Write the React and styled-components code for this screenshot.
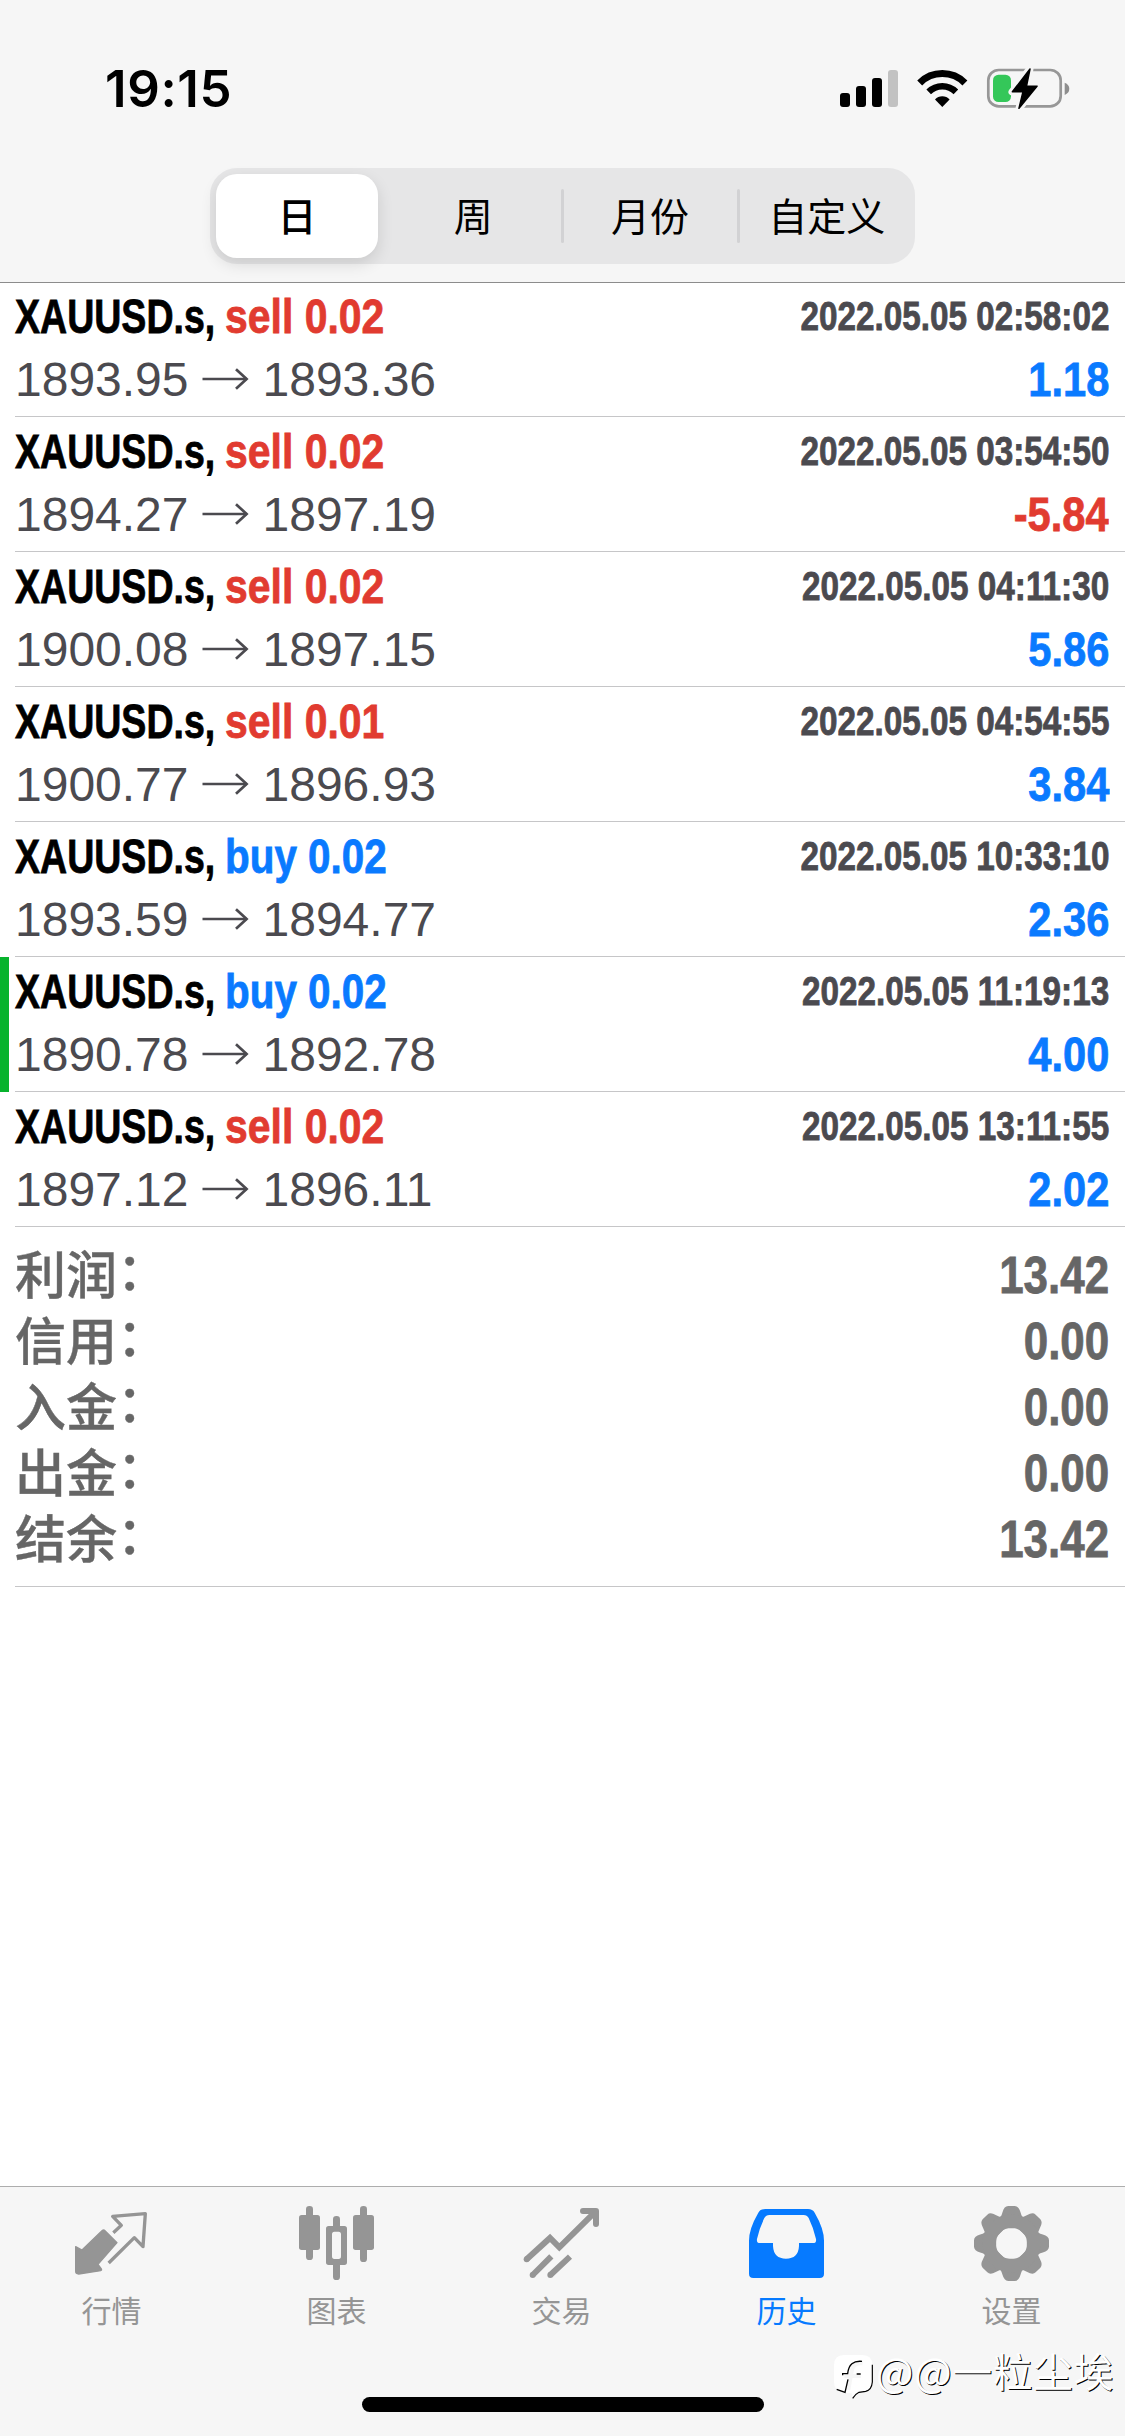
import styled, { createGlobalStyle } from 'styled-components';

const RED = '#e13b30';
const BLUE = '#0a7aff';

const deals = [
  { side: 'sell', volume: '0.02', open: '1893.95', close: '1893.36', time: '2022.05.05 02:58:02', profit: '1.18' },
  { side: 'sell', volume: '0.02', open: '1894.27', close: '1897.19', time: '2022.05.05 03:54:50', profit: '-5.84' },
  { side: 'sell', volume: '0.02', open: '1900.08', close: '1897.15', time: '2022.05.05 04:11:30', profit: '5.86' },
  { side: 'sell', volume: '0.01', open: '1900.77', close: '1896.93', time: '2022.05.05 04:54:55', profit: '3.84' },
  { side: 'buy', volume: '0.02', open: '1893.59', close: '1894.77', time: '2022.05.05 10:33:10', profit: '2.36' },
  { side: 'buy', volume: '0.02', open: '1890.78', close: '1892.78', time: '2022.05.05 11:19:13', profit: '4.00', marked: true },
  { side: 'sell', volume: '0.02', open: '1897.12', close: '1896.11', time: '2022.05.05 13:11:55', profit: '2.02' },
];

const totals = [
  { label: '利润', value: '13.42' },
  { label: '信用', value: '0.00' },
  { label: '入金', value: '0.00' },
  { label: '出金', value: '0.00' },
  { label: '结余', value: '13.42' },
];

const periods = ['日', '周', '月份', '自定义'];

const tabs = [
  { label: '行情', icon: QuotesIcon },
  { label: '图表', icon: ChartIcon },
  { label: '交易', icon: TradeIcon },
  { label: '历史', icon: HistoryIcon, active: true },
  { label: '设置', icon: SettingsIcon },
];

function App() {
  return (
    <Screen>
      <GlobalStyle />
      <Header>
        <StatusBar>
          <Clock>19:15</Clock>
          <StatusIcons />
        </StatusBar>
        <Segment>
          {periods.map((name, i) => (
            <SegmentItem key={name} $active={i === 0} $divider={i > 1}>
              {name}
            </SegmentItem>
          ))}
        </Segment>
      </Header>
      <DealList>
        {deals.map((deal) => (
          <Deal key={deal.time} deal={deal} />
        ))}
      </DealList>
      <Summary>
        {totals.map((e) => (
          <SummaryRow key={e.label}>
            <SummaryLabel>
              {e.label}
              <Colon>：</Colon>
            </SummaryLabel>
            <SummaryValue>{e.value}</SummaryValue>
          </SummaryRow>
        ))}
      </Summary>
      <TabBar>
        {tabs.map(({ label, icon: Icon, active }) => (
          <Tab key={label} $active={active}>
            <Icon />
            <TabLabel>{label}</TabLabel>
          </Tab>
        ))}
        <HomeIndicator />
        <Watermark>
          <WatermarkLogo />
          <span>@@一粒尘埃</span>
        </Watermark>
      </TabBar>
    </Screen>
  );
}

export default App;

function Deal({ deal }) {
  return (
    <DealRow $marked={deal.marked}>
      <DealBody>
        <Line>
          <DealTitle>
            <Symbol>XAUUSD.s,</Symbol>
            <Side $side={deal.side}>
              {deal.side} {deal.volume}
            </Side>
          </DealTitle>
          <Time>{deal.time}</Time>
        </Line>
        <Line>
          <Prices>
            {deal.open}
            <Arrow />
            {deal.close}
          </Prices>
          <Profit $loss={deal.profit.startsWith('-')}>{deal.profit}</Profit>
        </Line>
      </DealBody>
    </DealRow>
  );
}

function Arrow() {
  return (
    <ArrowSvg viewBox="0 0 48 24" fill="none" stroke="#4b4a4f" strokeWidth="2.7">
      <path d="M0.5 12H45" />
      <path d="M34 2.2L44.6 12L34 21.8" />
    </ArrowSvg>
  );
}

function StatusIcons() {
  return (
    <StatusSvg viewBox="0 0 230 44">
      <rect x="1" y="25" width="10" height="14" rx="3" />
      <rect x="17" y="18" width="10" height="21" rx="3" />
      <rect x="33" y="10" width="10" height="29" rx="3" />
      <rect x="49" y="2" width="10" height="37" rx="3" fill="#c2c2c2" />
      <g fill="none" stroke="#000">
        <path d="M80.700 14.900A32 32 0 0 1 125.900 14.900" strokeWidth="7" />
        <path d="M89.700 23.900A19.200 19.200 0 0 1 116.900 23.900" strokeWidth="6.500" />
      </g>
      <path d="M103.300 39L96 31.400A10 10 0 0 1 110.600 31.400Z" />
      <rect x="149.300" y="2" width="72.400" height="36.400" rx="10.500" fill="none" stroke="#979797" strokeWidth="2.700" />
      <path d="M225.700 14.700Q230.300 16.500 230.300 20.800T225.700 27Z" fill="#8e8e8e" />
      <rect x="154" y="6.700" width="18" height="27.300" rx="5.500" fill="#34c759" />
      <path
        d="M191 0.500L173 24H183.700L180 40.500L198.500 18H188.500Z"
        stroke="#f6f6f6"
        strokeWidth="7"
        strokeLinejoin="round"
        fill="#f6f6f6"
      />
      <path
        d="M191 1L173.400 23.800H184L180 40.300L198 18.200H187.500Z"
        stroke="#000"
        strokeWidth="1.500"
        strokeLinejoin="round"
      />
    </StatusSvg>
  );
}

function QuotesIcon() {
  return (
    <TabSvg viewBox="225 105 225 225">
      <path
        d="M315 182L351 218L294 283L304 297Q306 301 302 302L236 312Q227 312 227 304V230L246 240L306 182Q311 178 315 182Z"
        fill="currentColor"
        stroke="currentColor"
        strokeWidth="4"
        strokeLinejoin="round"
      />
      <path
        d="M340 188L364 166L338 139L436 131L429 230L403 203L326 279"
        fill="none"
        stroke="currentColor"
        strokeWidth="10"
        strokeLinejoin="round"
      />
    </TabSvg>
  );
}

function ChartIcon() {
  return (
    <TabSvg viewBox="900 105 225 225" fill="currentColor">
      <rect x="918" y="108" width="21" height="162" rx="10" />
      <rect x="897" y="135" width="63" height="105" rx="8" />
      <rect x="999" y="138" width="21" height="42" rx="10" />
      <rect x="999" y="275" width="21" height="55" rx="10" />
      <path
        fillRule="evenodd"
        d="M986 168H1033Q1041 168 1041 176V277Q1041 285 1033 285H986Q978 285 978 277V176Q978 168 986 168ZM1003 185Q996 185 996 193V259Q996 267 1003 267H1016Q1023 267 1023 259V193Q1023 185 1016 185Z"
      />
      <rect x="1080" y="108" width="21" height="168" rx="10" />
      <rect x="1059" y="135" width="63" height="105" rx="8" />
    </TabSvg>
  );
}

function TradeIcon() {
  return (
    <TabSvg viewBox="315 105 225 225" fill="none" stroke="currentColor" strokeWidth="18">
      <path d="M320 268L390 204L418 232L524 127" />
      <path d="M489 123H528V162" strokeLinecap="round" strokeLinejoin="round" />
      <path d="M338 315L394 259M391 315L450 260" />
      <g fill="currentColor" stroke="none">
        <circle cx="320" cy="268" r="9" />
        <circle cx="338" cy="315" r="9" />
        <circle cx="391" cy="315" r="9" />
      </g>
    </TabSvg>
  );
}

function HistoryIcon() {
  return (
    <TabSvg viewBox="990 105 225 225" fill="currentColor">
      <path
        fillRule="evenodd"
        d="M1036 117H1164Q1178 117 1184 128Q1212 176 1212 212V311Q1212 324 1199 324H1000Q987 324 987 311V212Q987 176 1015 128Q1021 117 1036 117ZM1048 135Q1038 135 1033 144Q1018 175 1011 207Q1009 219 1020 219H1059V228Q1061 266 1098 266Q1135 266 1137 228V219H1179Q1190 219 1188 207Q1181 175 1166 144Q1161 135 1151 135Z"
      />
    </TabSvg>
  );
}

function SettingsIcon() {
  return (
    <TabSvg viewBox="525 105 225 225" fill="currentColor">
      <g transform="translate(634.500 220.500)">
        {[0, 45, 90, 135, 180, 225, 270, 315].map((angle) => (
          <path
            key={angle}
            transform={`rotate(${angle})`}
            d="M-42 -70Q-31 -78 -27 -94Q-22 -112 -10 -112.500H10Q22 -112 27 -94Q31 -78 42 -70L20 -46H-20Z"
          />
        ))}
        <circle r="67" fill="none" stroke="currentColor" strokeWidth="40" />
      </g>
    </TabSvg>
  );
}

function WatermarkLogo() {
  return (
    <LogoSvg viewBox="27 45 117 132">
      <path
        d="M57 45H112Q142 45 142 76V126Q142 152 116 157L98 160L84 174L80 160L62 158L34 148Q27 140 27 126V76Q27 45 57 45Z"
        fill="#fff"
      />
      <path
        d="M113 70Q84 66 80 94L70 150M58 108H108"
        fill="none"
        stroke="#f6f6f6"
        strokeWidth="12"
      />
      <path
        d="M111 64Q72 60 68 101H53V106M95 102H107M69 118L60 157L35 148"
        fill="none"
        stroke="#000"
        strokeWidth="4"
      />
      <path d="M142 74V126Q140 150 122 154L102 157Q90 163 83 175" fill="none" stroke="#000" strokeWidth="3.5" />
    </LogoSvg>
  );
}

const GlobalStyle = createGlobalStyle`
  body {
    margin: 0;
    background: #fff;
  }
  * {
    box-sizing: border-box;
  }
`;
const Screen = styled.div`
  display: flex;
  flex-direction: column;
  width: 1125px;
  height: 2436px;
  overflow: hidden;
  background: #fff;
  font-family: 'Liberation Sans', 'Noto Sans CJK SC', sans-serif;
`;
const Header = styled.header`
  position: relative;
  z-index: 1;
  flex: none;
  height: 283px;
  background: #f6f6f6;
  border-bottom: 1px solid #8c8c8c;
`;
const StatusBar = styled.div`
  display: flex;
  justify-content: space-between;
  height: 168px;
  padding: 58px 56px 0 105px;
`;
const Clock = styled.div`
  font-family: Inter, sans-serif;
  font-size: 51px;
  font-weight: 600;
  line-height: 62px;
  letter-spacing: 0.6px;
`;
const StatusSvg = styled.svg`
  width: 230px;
  height: 44px;
  margin-top: 10px;
  overflow: visible;
`;
const Segment = styled.div`
  display: flex;
  width: 705px;
  height: 96px;
  margin-left: 210px;
  padding: 6px 0 6px 6px;
  border-radius: 27px;
  background: #e6e6e7;
`;
const SegmentItem = styled.div`
  display: flex;
  justify-content: center;
  position: relative;
  width: ${(props) => (props.$active ? '162px' : '177px')};
  margin-right: ${(props) => (props.$active ? '7px' : '0')};
  border-radius: 21px;
  background: ${(props) => (props.$active ? '#fff' : 'none')};
  box-shadow: ${(props) => (props.$active ? '0 6px 16px rgba(0, 0, 0, 0.12)' : 'none')};
  font-family: 'Noto Sans CJK SC', sans-serif;
  font-size: 39px;
  font-weight: ${(props) => (props.$active ? 500 : 400)};
  line-height: 80px;

  &::before {
    content: '';
    display: ${(props) => (props.$divider ? 'block' : 'none')};
    position: absolute;
    left: -1px;
    top: 15px;
    width: 3px;
    height: 54px;
    border-radius: 2px;
    background: #d2d2d4;
  }
`;
const DealList = styled.div`
  flex: none;
  margin-top: -1px;
`;
const DealRow = styled.div`
  height: 135px;
  padding-left: ${(props) => (props.$marked ? '6px' : '15px')};
  border-left: ${(props) => (props.$marked ? '9px solid #07b32d' : 'none')};
`;
const DealBody = styled.div`
  display: flex;
  flex-direction: column;
  height: 135px;
  padding: 5px 16px 0 0;
  border-bottom: 1px solid #c6c6c8;
`;
const Line = styled.div`
  display: flex;
  justify-content: space-between;
  height: 63px;
  line-height: 59px;
  white-space: nowrap;
`;
/* bold grotesque squeezed to condensed proportions */
const Condensed = styled.div`
  font-weight: 700;
  -webkit-text-stroke: 0.8px currentColor;
  transform-origin: ${(props) => props.$origin || 'left'} center;
`;
const DealTitle = styled.div`
  display: flex;
  font-size: 49px;
  line-height: 58px;
`;
const Symbol = styled(Condensed)`
  width: 210px;
  color: #000;
  transform: scaleX(0.766);
`;
const Side = styled(Condensed)`
  color: ${(props) => (props.$side === 'buy' ? BLUE : RED)};
  transform: scaleX(${(props) => (props.$side === 'buy' ? 0.825 : 0.835)});
`;
const Time = styled(Condensed).attrs({ $origin: 'right' })`
  color: #4b4a4f;
  font-size: 40px;
  line-height: 58px;
  transform: scaleX(0.832);
`;
const Prices = styled.div`
  display: flex;
  color: #4b4a4f;
  font-size: 48px;
`;
const ArrowSvg = styled.svg`
  width: 48px;
  height: 24px;
  margin: 17px 13px 0;
`;
const Profit = styled(Condensed).attrs({ $origin: 'right' })`
  color: ${(props) => (props.$loss ? RED : BLUE)};
  font-size: 49px;
  line-height: 58px;
  transform: scaleX(0.85);
`;
const Summary = styled.div`
  flex: none;
  height: 360px;
  margin-left: 15px;
  padding: 15px 16px 14px 0;
  border-bottom: 1px solid #c6c6c8;
`;
const SummaryRow = styled.div`
  display: flex;
  justify-content: space-between;
  height: 66px;
  color: #666;
  line-height: 66px;
`;
const SummaryLabel = styled.div`
  padding-top: 2px;
  font-size: 51px;
  font-weight: 500;
  -webkit-text-stroke: 0.4px currentColor;
`;
const Colon = styled.span`
  position: relative;
  top: -4px;
`;
const SummaryValue = styled(Condensed).attrs({ $origin: 'right' })`
  font-size: 52px;
  transform: scaleX(0.845);
`;
const TabBar = styled.nav`
  position: relative;
  display: flex;
  flex: none;
  height: 250px;
  margin-top: auto;
  padding-top: 18px;
  border-top: 1px solid #adadad;
  background: #f6f6f6;
`;
const Tab = styled.div`
  display: flex;
  flex-direction: column;
  align-items: center;
  width: 225px;
  color: ${(props) => (props.$active ? '#067aff' : '#959595')};
`;
const TabSvg = styled.svg`
  width: 75px;
  height: 75px;
  overflow: visible;
`;
const TabLabel = styled.div`
  margin: 7px 2px 0 0;
  font-family: 'Noto Sans CJK SC', sans-serif;
  font-size: 30px;
  line-height: 44px;
`;
const HomeIndicator = styled.div`
  position: absolute;
  left: 362px;
  bottom: 24px;
  width: 402px;
  height: 15px;
  border-radius: 8px;
  background: #000;
`;
const Watermark = styled.div`
  position: absolute;
  left: 834px;
  top: 156px;
  display: flex;
  gap: 3px;
  color: #fff;
  font-family: 'Noto Sans CJK SC', sans-serif;
  font-size: 39.5px;
  line-height: 53px;
  letter-spacing: 0.9px;
  white-space: nowrap;
  text-shadow: 1px 1px 0.5px #000;
`;
const LogoSvg = styled.svg`
  width: 39px;
  height: 44px;
  margin-top: 12px;
`;
